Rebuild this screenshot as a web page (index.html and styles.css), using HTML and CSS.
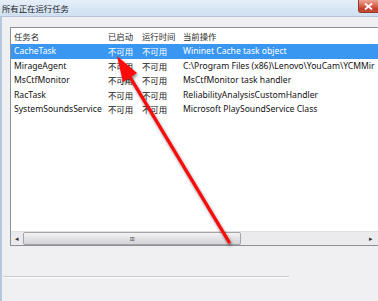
FILE: index.html
```html
<!DOCTYPE html>
<html lang="zh">
<head>
<meta charset="utf-8">
<link rel="stylesheet" href="styles.css">
</head>
<body>
<div class="window">
  <div class="titlebar">
    <span class="title">所有正在运行任务</span>
    <span class="close"><svg class="close-x" width="9" height="7" viewBox="0 0 9 7"><path d="M1 0.5 L8 6.5 M8 0.5 L1 6.5" stroke="#ffffff" stroke-width="1.8"/></svg></span>
  </div>
  <div class="body">
    <div class="listbox">
      <div class="grid header">
        <div class="cell">任务名</div>
        <div class="cell">已启动</div>
        <div class="cell">运行时间</div>
        <div class="cell">当前操作</div>
      </div>
      <div class="grid row selected">
        <div class="cell">CacheTask</div>
        <div class="cell">不可用</div>
        <div class="cell">不可用</div>
        <div class="cell">Wininet Cache task object</div>
      </div>
      <div class="grid row">
        <div class="cell">MirageAgent</div>
        <div class="cell">不可用</div>
        <div class="cell">不可用</div>
        <div class="cell">C:\Program Files (x86)\Lenovo\YouCam\YCMMir</div>
      </div>
      <div class="grid row">
        <div class="cell">MsCtfMonitor</div>
        <div class="cell">不可用</div>
        <div class="cell">不可用</div>
        <div class="cell">MsCtfMonitor task handler</div>
      </div>
      <div class="grid row">
        <div class="cell">RacTask</div>
        <div class="cell">不可用</div>
        <div class="cell">不可用</div>
        <div class="cell">ReliabilityAnalysisCustomHandler</div>
      </div>
      <div class="grid row">
        <div class="cell">SystemSoundsService</div>
        <div class="cell">不可用</div>
        <div class="cell">不可用</div>
        <div class="cell">Microsoft PlaySoundService Class</div>
      </div>
      <div class="fill"></div>
      <div class="scrollbar">
        <div class="sb-btn left">◂</div>
        <div class="thumb"><span class="grip">III</span></div>
        <div class="track"></div>
        <div class="sb-btn right">▸</div>
      </div>
    </div>
    <div class="sep"></div>
  </div>
  <svg class="arrow" width="378" height="301" viewBox="0 0 378 301">
    <line x1="229" y1="242" x2="127" y2="72" stroke="#ff0a0a" stroke-width="3.4" stroke-linecap="round"/>
    <polygon points="117,56 137,73 123,82" fill="#ff0a0a"/>
  </svg>
</div>
</body>
</html>
```

FILE: styles.css
```css
* { box-sizing: border-box; }
html, body {
  margin: 0;
  padding: 0;
  width: 378px;
  height: 301px;
  overflow: hidden;
  background: #f0f0f0;
}
.window {
  position: relative;
  width: 378px;
  height: 301px;
  display: flex;
  flex-direction: column;
  font-family: "Noto Sans", "Noto Sans CJK SC", sans-serif;
  font-size: 8.6px;
  color: #111;
}
.titlebar {
  height: 17px;
  flex: none;
  display: flex;
  align-items: flex-start;
  background: linear-gradient(to bottom, #e6eff9 0%, #d6e5f4 60%, #d0e0f2 100%);
  border-bottom: 1px solid #b5c4d6;
}
.title {
  flex: 1;
  padding: 2px 0 0 2px;
  font-family: "Noto Sans CJK SC", sans-serif;
  font-size: 8.4px;
  line-height: 12px;
  color: #1a1a1a;
}
.close {
  flex: 0 0 20px;
  width: 20px;
  height: 13px;
  background-color: #cf4f38;
  background-image: linear-gradient(to bottom, #eaa594, #d9634b 45%, #c23a26 70%, #d0553c);
  box-shadow: inset 1px 0 0 #8c3a2c, inset 0 -1px 0 #8c3a2c;
  border-bottom-left-radius: 3px;
  display: flex;
  align-items: center;
  justify-content: center;
}
.close-x { display: block; }
.body {
  flex: 1;
  display: flex;
  flex-direction: column;
  padding: 10px 0 0 8px;
  border-left: 2px solid #b4c8de;
  background: #f0eff2;
}
.listbox {
  width: 368px;
  height: 219px;
  background: #fff;
  border: 1px solid #8c9096;
  border-right: none;
  display: flex;
  flex-direction: column;
  overflow: hidden;
}
.grid {
  display: grid;
  grid-template-columns: 94px 34px 41px 1fr;
  white-space: nowrap;
}
.cell {
  padding-left: 3px;
  overflow: hidden;
}
.header {
  height: 16px;
  line-height: 16px;
  font-family: "Noto Sans CJK SC", sans-serif;
  font-size: 8.4px;
  color: #2a2a2a;
}
.row {
  height: 14.5px;
  line-height: 14.5px;
}
.row .cell:nth-child(2), .row .cell:nth-child(3) {
  font-family: "Noto Sans CJK SC", sans-serif;
  font-size: 8.4px;
}
.selected {
  background: #3997f1;
  color: #fff;
}
.fill { flex: 1; }
.scrollbar {
  height: 14px;
  flex: none;
  display: flex;
  background: #ebebed;
  border-top: 1px solid #e0e0e0;
}
.sb-btn {
  width: 12px;
  font-size: 7px;
  line-height: 13px;
  text-align: center;
  color: #333;
}
.sb-btn.right {
  width: 9px;
  text-align: left;
}
.thumb {
  width: 218px;
  height: 13px;
  border: 1px solid #a4a4a8;
  border-radius: 2px;
  background: linear-gradient(to bottom, #f4f4f6 0%, #e2e2e6 50%, #d2d2d8 100%);
  display: flex;
  justify-content: center;
  align-items: center;
}
.grip {
  font-size: 6px;
  letter-spacing: -0.5px;
  color: #555;
  line-height: 6px;
}
.track { flex: 1; }
.sep {
  margin-top: 30px;
  margin-left: -7px;
  width: 286px;
  height: 2px;
  border-top: 1px solid #c9c9cc;
  border-bottom: 1px solid #fbfbfb;
}
.arrow {
  position: absolute;
  left: 0;
  top: 0;
  filter: drop-shadow(1.5px 2px 1.5px rgba(0,0,0,0.45));
  pointer-events: none;
}
```
